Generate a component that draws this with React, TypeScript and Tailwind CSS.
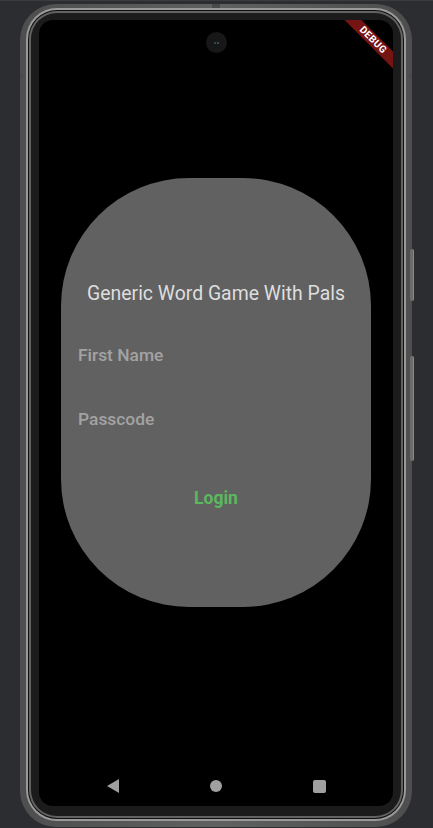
import React from "react";

export default function App() {
  return (
    <div
      className="relative w-[433px] h-[828px] overflow-hidden bg-[#2b2d30] border-t border-[#3a3c40]"
      style={{ fontFamily: "Roboto, 'Noto Sans', sans-serif" }}
    >
      {/* device frame */}
      <div className="relative ml-[20px] mt-[3px] w-[392px] h-[823px]">
        {/* side buttons */}
        <div className="absolute right-[-2px] top-[245px] w-[4px] h-[52px] rounded-[2px] bg-[#6c6c6c] border-r border-[#8a8a8a]" />
        <div className="absolute right-[-2px] top-[352px] w-[4px] h-[105px] rounded-[2px] bg-[#6c6c6c] border-r border-[#8a8a8a]" />
        <div className="absolute left-[0px] top-[69px] w-[3px] h-[6px] bg-[#4a4a4a]" />
        <div className="absolute right-[0px] top-[69px] w-[3px] h-[6px] bg-[#4a4a4a]" />
        <div className="absolute left-[192px] top-[0px] w-[8px] h-[4px] bg-[#4a4a4a] z-10" />

        <div className="w-full h-full rounded-[36px] bg-gradient-to-r from-[#4e4e4e] via-[#606060] to-[#4e4e4e] p-[6px] pt-[4px]">
          <div className="w-full h-full rounded-[31px] bg-[#9a9a9a] p-[2px]">
            <div className="w-full h-full rounded-[29px] bg-[#101010] p-[1px]">
              <div className="w-full h-full rounded-[28px] bg-[#626262] p-[2px]">
                <div className="w-full h-full rounded-[26px] bg-[#1b1b1b] px-[8px] pt-[7px] pb-[9px]">
                  {/* screen */}
                  <div className="relative w-[354px] h-[786px] bg-black rounded-[14px] overflow-hidden flex flex-col">
                    {/* camera */}
                    <div className="absolute left-[167px] top-[12px] w-[21px] h-[21px] rounded-full bg-[#171717] flex items-center justify-center gap-[1px]">
                      <div className="w-[2px] h-[2px] rounded-full bg-[#3a5a58]" />
                      <div className="w-[2px] h-[2px] rounded-full bg-[#4a5a80]" />
                    </div>

                    {/* debug banner */}
                    <div className="absolute right-[-30px] top-[14px] w-[100px] h-[12px] rotate-45 bg-[#761313] flex items-center justify-center">
                      <span className="text-white text-[10px] font-bold leading-none tracking-[0.3px]">
                        DEBUG
                      </span>
                    </div>

                    {/* card */}
                    <div className="mx-[22px] mt-[158px] w-[310px] h-[429px] rounded-[128px] bg-[#616161] flex flex-col pt-[104px]">
                      <div className="h-[24px] leading-[24px] text-center text-[19.4px] text-[#dedede]">
                        Generic Word Game With Pals
                      </div>
                      <div className="mt-[39px] h-[20px] leading-[20px] pl-[17px] text-[17.4px] font-medium text-[#a3a3a3]">
                        First Name
                      </div>
                      <div className="mt-[44px] h-[20px] leading-[20px] pl-[17px] text-[17.4px] font-medium text-[#a3a3a3]">
                        Passcode
                      </div>
                      <div className="mt-[59px] h-[20px] leading-[20px] text-center text-[17.5px] font-bold text-[#5cb85f]">
                        Login
                      </div>
                    </div>

                    <div className="flex-1" />

                    {/* nav bar */}
                    <div className="h-[40px] flex items-center justify-center">
                      <div className="w-[103px] flex items-center justify-center">
                        <svg width="12" height="14" viewBox="0 0 12 14">
                          <path d="M0 7 L12 0 L12 14 Z" fill="#a0a0a0" />
                        </svg>
                      </div>
                      <div className="w-[103px] flex items-center justify-center">
                        <div className="w-[12px] h-[12px] rounded-full bg-[#a0a0a0]" />
                      </div>
                      <div className="w-[103px] flex items-center justify-center">
                        <div className="w-[13px] h-[13px] rounded-[2px] bg-[#a0a0a0]" />
                      </div>
                    </div>
                  </div>
                </div>
              </div>
            </div>
          </div>
        </div>
      </div>
    </div>
  );
}
